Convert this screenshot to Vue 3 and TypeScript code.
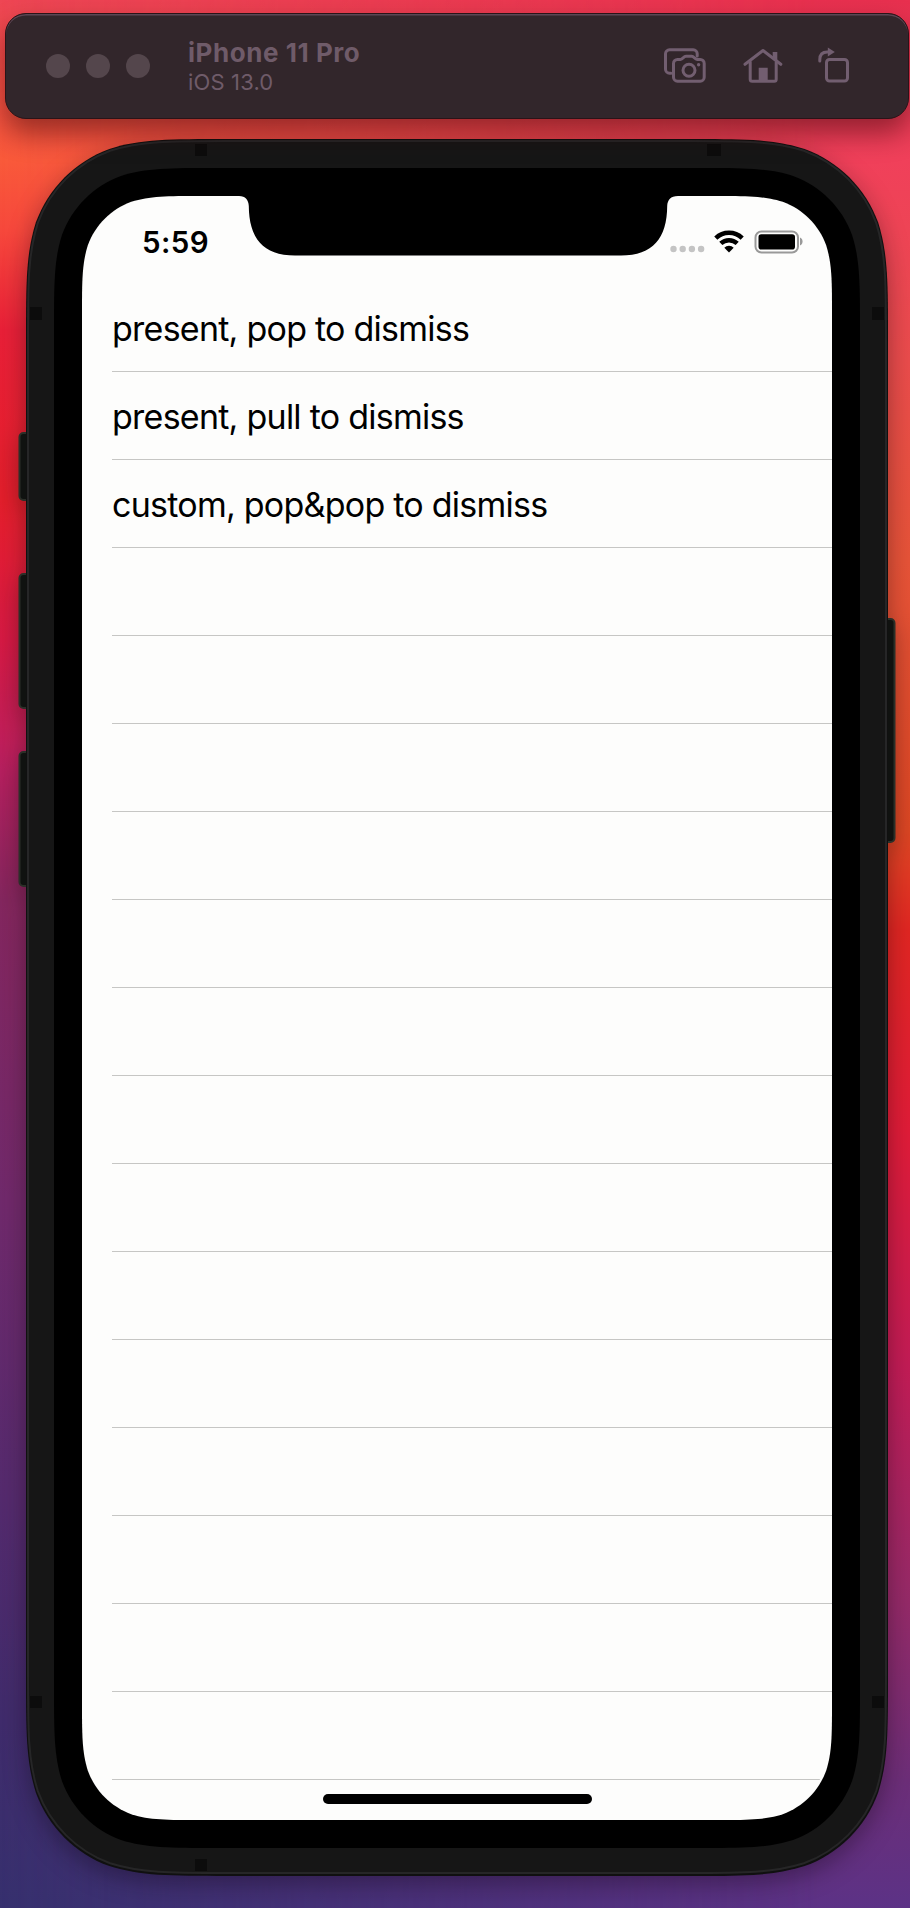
<script setup lang="ts">
interface Box {
  x: number
  y: number
  w: number
  h: number
}

const rows: string[] = [
  'present, pop to dismiss',
  'present, pull to dismiss',
  'custom, pop&pop to dismiss',
  ...Array<string>(14).fill(''),
]

// Rounded rectangle whose corners ease in continuously instead of being plain arcs
function smoothRect({ x, y, w, h }: Box, r: number): string {
  const corner = [
    [1.52866, 0],
    [1.08849, 0],
    [0.86841, 0],
    [0.63149, 0.07491],
    [0.37282, 0.16906],
    [0.16906, 0.37282],
    [0.07491, 0.63149],
    [0, 0.86841],
    [0, 1.08849],
    [0, 1.52866],
  ]
  const back = [...corner].reverse()
  const place = (points: number[][], right: boolean, bottom: boolean) => {
    const p = points.map(([a, b]) => {
      const px = right ? x + w - a * r : x + a * r
      const py = bottom ? y + h - b * r : y + b * r
      return `${px.toFixed(2)} ${py.toFixed(2)}`
    })
    return `${p[0]} C${p.slice(1, 4).join(' ')} C${p.slice(4, 7).join(' ')} C${p.slice(7).join(' ')}`
  }
  return `M${place(corner, true, false)} L${place(back, true, true)} L${place(corner, false, true)} L${place(back, false, false)}Z`
}

const shell = smoothRect({ x: 26, y: 21, w: 862, h: 1737 }, 132)
const rim = smoothRect({ x: 28, y: 23, w: 858, h: 1732 }, 130)
const bezel = smoothRect({ x: 54, y: 50, w: 806, h: 1680 }, 106)
const screen = smoothRect({ x: 0, y: 0, w: 750, h: 1624 }, 78)

const sideButtons: Box[] = [
  { x: 19.5, y: 315, w: 16, h: 67 },
  { x: 19.5, y: 456, w: 16, h: 134 },
  { x: 19.5, y: 634, w: 16, h: 134 },
  { x: 878.5, y: 501, w: 16, h: 223 },
]

const antennas: Box[] = [
  { x: 195, y: 26, w: 12, h: 12 },
  { x: 707, y: 26, w: 14, h: 12 },
  { x: 30, y: 189, w: 12, h: 13 },
  { x: 872, y: 189, w: 12, h: 13 },
  { x: 30, y: 1578, w: 12, h: 12 },
  { x: 872, y: 1578, w: 12, h: 12 },
  { x: 195, y: 1741, w: 12, h: 12 },
]
</script>

<template>
  <main class="desktop">
    <header class="toolbar">
      <div class="lights">
        <span v-for="n in 3" :key="n" class="light" />
      </div>
      <div class="titles">
        <h1 class="title">iPhone 11 Pro</h1>
        <p class="subtitle">iOS 13.0</p>
      </div>
      <div class="tools">
        <svg class="tool" width="44" height="36" viewBox="0 0 44 36">
          <path d="M8 25.200H6.500a4 4 0 0 1-4-4V5.800a4 4 0 0 1 4-4h23.700a4 4 0 0 1 4 4V8" />
          <path d="M10.500 15.500a4 4 0 0 1 4-4h3c2.500 0 3-3.300 5.500-3.300h5.600c2.500 0 3 3.300 5.500 3.300h3.100a4 4 0 0 1 4 4v13.700a4 4 0 0 1-4 4H14.500a4 4 0 0 1-4-4z" />
          <circle cx="26" cy="22.300" r="6" />
          <circle class="solid" cx="35.600" cy="16.700" r="1.700" />
        </svg>
        <svg class="tool home" width="40" height="36" viewBox="0 0 40 36">
          <path d="M2 16.300 20 2.500 37.800 16.300" />
          <path d="M7.200 14v17.200a2 2 0 0 0 2 2h22a2 2 0 0 0 2-2V14" />
          <path class="solid" d="M15.700 19.700h9V34h-9zM29.700 4h4.600v9l-4.600-3.500z" />
        </svg>
        <svg class="tool rotate" width="34" height="36" viewBox="0 0 34 36">
          <rect x="9.500" y="11.500" width="21" height="21.500" rx="3" />
          <path d="M2.800 13v-1.500c0-4.800 2.700-7.500 7.500-7.500h2.500" />
          <path class="solid" d="M10.800-.5v9l7-4.500z" />
        </svg>
      </div>
    </header>

    <section class="device">
      <svg class="frame" width="910" height="1790" viewBox="0 0 910 1790">
        <rect v-for="b in sideButtons" :key="b.y" class="side-button" :x="b.x" :y="b.y" :width="b.w" :height="b.h" rx="4" />
        <path class="shell" :d="shell" />
        <path class="rim" :d="rim" />
        <rect v-for="a in antennas" :key="`${a.x}-${a.y}`" class="antenna" :x="a.x" :y="a.y" :width="a.w" :height="a.h" />
        <path class="bezel" :d="bezel" />
        <path class="screen-bg" :d="screen" transform="translate(82 78)" />
        <path class="notch" d="M239 77V78C245.500 78 248.500 82 248.800 88C249 120 263 137.500 295 137.500H621C653 137.500 667 120 667.200 88C667.500 82 670.500 78 678 78V77Z" />
      </svg>

      <div class="screen">
        <div class="status">
          <time class="clock">5:59</time>
          <div class="indicators">
            <svg class="signal" width="36" height="8" viewBox="0 0 36 8">
              <circle v-for="n in 4" :key="n" :cx="n * 9.200 - 5.700" cy="4" r="3.200" />
            </svg>
            <svg class="wifi" width="30" height="23" viewBox="0 0 30 23">
              <path d="M1.800 8.200a19 19 0 0 1 26.400 0M6.800 13.400a12 12 0 0 1 16.400 0" />
              <path class="solid" d="M15 22.500 10.300 17.700a6.800 6.800 0 0 1 9.400 0z" />
            </svg>
            <svg class="battery" width="49" height="23" viewBox="0 0 49 23">
              <rect class="case" x="1.500" y="1.500" width="42.500" height="21" rx="6" />
              <rect x="4.500" y="4.200" width="36.500" height="15.300" rx="2.800" />
              <path class="cap" d="M46 7.500c3.400 1.300 3.400 6.700 0 8z" />
            </svg>
          </div>
        </div>

        <ul class="list">
          <li v-for="(row, i) in rows" :key="i" class="row">{{ row }}</li>
        </ul>

        <div class="home-bar" />
      </div>
    </section>
  </main>
</template>

<style>
body {
  margin: 0;
}
</style>

<style scoped>
.desktop {
  position: relative;
  isolation: isolate;
  box-sizing: border-box;
  width: 910px;
  height: 1908px;
  padding-top: 13px;
  overflow: hidden;
  font-family: Inter, "Liberation Sans", sans-serif;
  background: linear-gradient(
    180deg,
    #ee4654 0,
    #f64f46 80px,
    #f95a3a 160px,
    #f6483c 230px,
    #e82038 330px,
    #e51f2c 500px,
    #d91a45 640px,
    #b82060 770px,
    #84275f 900px,
    #702a6c 1200px,
    #542b6e 1500px,
    #402c6c 1720px,
    #36306e 1908px
  );
}

.desktop::before {
  content: "";
  position: absolute;
  inset: 0;
  z-index: -1;
  background: linear-gradient(
    180deg,
    #e8304f 0,
    #f0405a 160px,
    #ea4c4c 360px,
    #e65338 560px,
    #e04824 830px,
    #e02622 930px,
    #e01c38 1130px,
    #c21c56 1370px,
    #952a68 1600px,
    #6c2e78 1780px,
    #5c3286 1908px
  );
  mask-image: linear-gradient(90deg, transparent 0, #000 90%);
}

.toolbar {
  display: flex;
  align-items: center;
  box-sizing: border-box;
  width: 904px;
  height: 106px;
  margin-left: 5px;
  padding: 0 57px 0 40px;
  border: 1px solid #2a1418;
  border-radius: 21px;
  background: #32262b;
  box-shadow: inset 0 1.500px 0 #5c4654, 0 14px 28px rgba(40, 0, 0, 0.45);
}

.lights {
  display: flex;
  gap: 16px;
}

.light {
  width: 24px;
  height: 24px;
  border-radius: 50%;
  background: #54464c;
}

.titles {
  margin: 1px 0 0 38px;
  color: #6f5b69;
  white-space: nowrap;
}

.title {
  margin: 0;
  font-size: 26px;
  font-weight: 700;
  line-height: 30px;
  letter-spacing: 0.55px;
}

.subtitle {
  margin: 0;
  font-size: 22px;
  line-height: 28px;
  letter-spacing: 0.15px;
}

.tools {
  display: flex;
  align-items: center;
  margin-left: auto;
}

.tool {
  overflow: visible;
  fill: none;
  stroke: #725e70;
  stroke-width: 3;
  stroke-linejoin: round;
  stroke-linecap: round;
}

.tool .solid {
  fill: #725e70;
  stroke: none;
}

.home {
  margin-left: 36px;
}

.rotate {
  margin-left: 34px;
}

.device {
  position: relative;
  width: 910px;
  height: 1790px;
  margin-top: -1px;
  padding: 78px 0 0 82px;
  box-sizing: border-box;
}

.frame {
  position: absolute;
  top: 0;
  left: 0;
  z-index: -1;
  overflow: visible;
  filter: drop-shadow(0 8px 12px rgba(10, 0, 10, 0.35));
}

.side-button {
  fill: #101210;
  stroke: #2b2f28;
  stroke-width: 2;
}

.shell {
  fill: #101010;
}

.rim {
  fill: #161616;
  stroke: #262627;
  stroke-width: 2;
}

.antenna {
  fill: #0c0c0c;
}

.bezel,
.notch {
  fill: #000;
}

.screen-bg {
  fill: #fdfdfc;
}

.screen {
  display: flex;
  flex-direction: column;
  align-items: center;
  width: 750px;
  height: 1624px;
  overflow: hidden;
  border-radius: 84px;
  color: #000;
}

.status {
  display: flex;
  justify-content: space-between;
  align-items: flex-start;
  box-sizing: border-box;
  width: 100%;
  height: 88px;
  padding: 34px 29px 0 60px;
}

.clock {
  font-size: 29.500px;
  font-weight: 600;
  line-height: 24px;
  letter-spacing: 0.4px;
}

.indicators {
  display: flex;
}

.signal {
  margin: 15px 8px 0 0;
  fill: #c4c4c4;
}

.wifi {
  margin-right: 10px;
  fill: none;
  stroke: #000;
  stroke-width: 4.500;
}

.wifi .solid {
  fill: #000;
  stroke: none;
}

.battery {
  overflow: visible;
}

.battery .case {
  fill: none;
  stroke: #999;
  stroke-width: 2;
}

.battery .cap {
  fill: #999;
}

.list {
  align-self: stretch;
  margin: 0 0 0 30px;
  padding: 0;
  list-style: none;
}

.row {
  box-sizing: border-box;
  height: 88px;
  border-bottom: 1px solid #c6c6c4;
  font-size: 34px;
  line-height: 89px;
  letter-spacing: -0.75px;
  white-space: nowrap;
}

.home-bar {
  width: 269px;
  height: 10px;
  margin-top: 14px;
  flex: none;
  border-radius: 5px;
  background: #000;
}
</style>
